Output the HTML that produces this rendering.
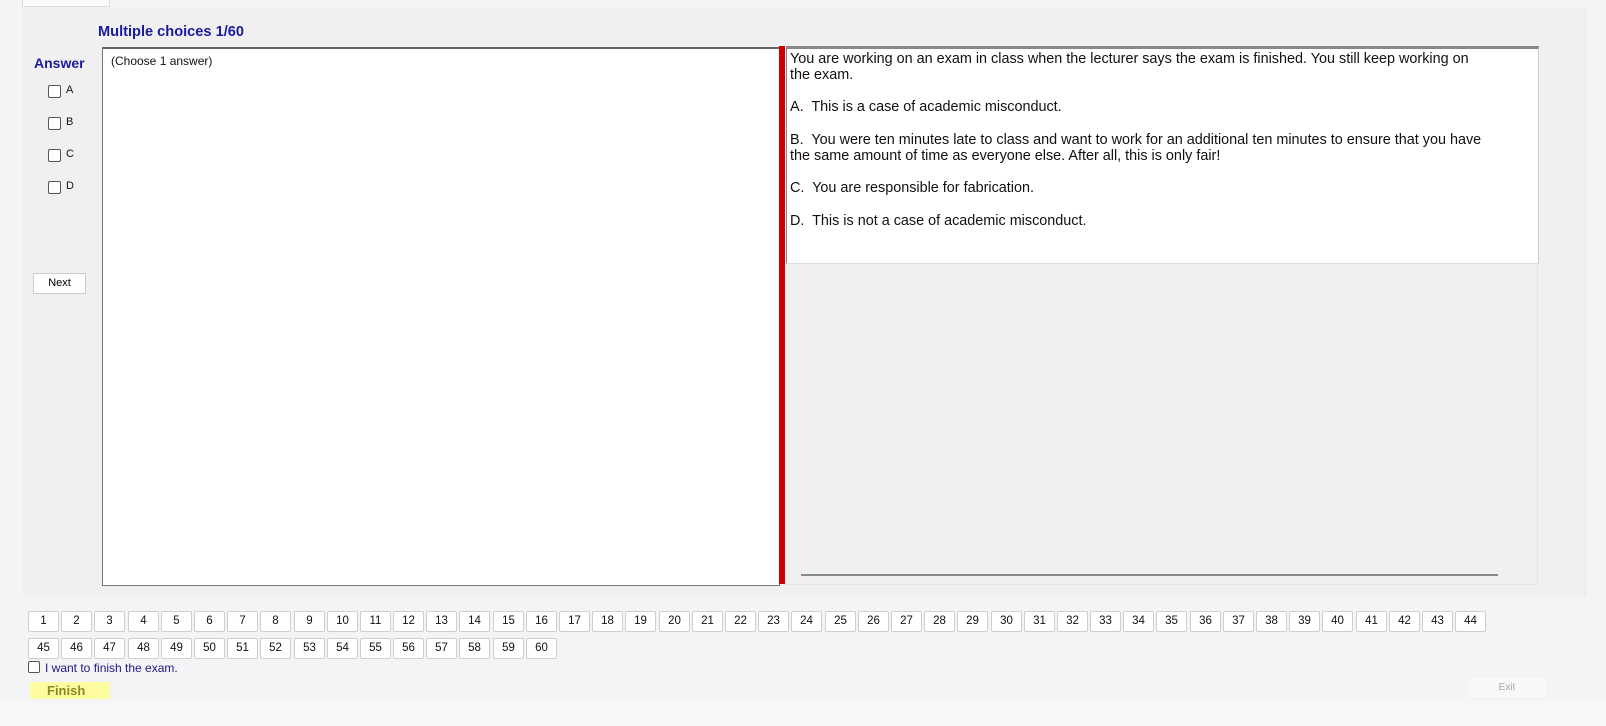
<!DOCTYPE html>
<html><head><style>
body{margin:0;width:1606px;height:726px;background:#f4f4f7;font-family:"Liberation Sans",Arial,sans-serif;position:relative;overflow:hidden}
.a{position:absolute}
.nb{position:absolute;width:29px;height:19px;background:#fff;border:1px solid #cfcfcf;border-radius:2px;font-size:11.5px;text-align:center;line-height:19px;color:#111}
.cb{position:absolute;width:11px;height:11px;border:1px solid #555;border-radius:2px;background:#fff}
.cl{position:absolute;font-size:11px;color:#111}
.q{position:absolute;left:808px;font-size:14.4px;color:#111;line-height:16px}
</style></head><body>
<div class="a" style="left:22px;top:8px;width:1563px;height:588px;background:#f0f0f0;border-right:1px solid #e6e6e6"></div>
<div class="a" style="left:22px;top:0;width:86px;height:6px;background:#fbfbfb;border:1px solid #ddd;border-top:none"></div>
<div class="a" style="left:98px;top:24px;font-size:14.6px;font-weight:bold;color:#1a1aa0">Multiple choices 1/60</div>
<div class="a" style="left:34px;top:55px;font-size:14px;font-weight:bold;color:#1a1aa0">Answer</div>
<div class="cb" style="left:48px;top:85px"></div><div class="cl" style="left:66px;top:84px">A</div>
<div class="cb" style="left:48px;top:117px"></div><div class="cl" style="left:66px;top:116px">B</div>
<div class="cb" style="left:48px;top:149px"></div><div class="cl" style="left:66px;top:148px">C</div>
<div class="cb" style="left:48px;top:181px"></div><div class="cl" style="left:66px;top:180px">D</div>
<div class="a" style="left:33px;top:273px;width:51px;height:19px;background:#fff;border:1px solid #ccc;font-size:11px;text-align:center;line-height:19px">Next</div>
<div class="a" style="left:102px;top:47px;width:676px;height:536px;background:#fff;border:1px solid #777;border-top:2px solid #666"></div>
<div class="a" style="left:111px;top:54px;font-size:12px;color:#111">(Choose 1 answer)</div>
<div class="a" style="left:779px;top:46px;width:6px;height:538px;background:#d00000"></div>
<div class="a" style="left:786px;top:46px;width:751px;height:538px;background:#f0f0f0;border-right:1px solid #e4e4e4;border-bottom:1px solid #e4e4e4"></div>
<div class="a" style="left:786px;top:46px;width:751px;height:214px;background:#fff;border-top:3px solid #888;border-left:1px solid #888;border-right:1px solid #ccc;border-bottom:1px solid #ddd"></div>
<div class="a" style="left:801px;top:574px;width:697px;height:2px;background:#888"></div>
<div class="q" style="left:790px;top:51px">You are working on an exam in class when the lecturer says the exam is finished. You still keep working on<br>the exam.</div>
<div class="q" style="left:790px;top:99px">A.&nbsp; This is a case of academic misconduct.</div>
<div class="q" style="left:790px;top:132px">B.&nbsp; You were ten minutes late to class and want to work for an additional ten minutes to ensure that you have<br>the same amount of time as everyone else. After all, this is only fair!</div>
<div class="q" style="left:790px;top:180px">C.&nbsp; You are responsible for fabrication.</div>
<div class="q" style="left:790px;top:213px">D.&nbsp; This is not a case of academic misconduct.</div>
<div id="nums"></div>
<div class="cb" style="left:28px;top:661px;width:10px;height:10px"></div>
<div class="a" style="left:45px;top:661px;font-size:12px;color:#1a1a80">I want to finish the exam.</div>
<div class="a" style="left:30px;top:682px;width:80px;height:17px;background:#fdfca0;color:#8a8a20;font-weight:bold;font-size:13px;line-height:17px;padding-left:17px;box-sizing:border-box">Finish</div>
<div class="a" style="left:1468px;top:678px;width:78px;height:20px;background:#f8f8fa;color:#aaa;font-size:10px;text-align:center;line-height:20px">Exit</div>
<div class="a" style="left:0;top:700px;width:1606px;height:26px;background:#f7f7f9"></div>
<script>
var h='';for(var i=1;i<=60;i++){var r=i<=44?0:1,c=r?i-45:i-1;var x=Math.round(28+c*33.19),y=r?638:611;h+='<div class="nb" style="left:'+x+'px;top:'+y+'px">'+i+'</div>';}
document.getElementById('nums').innerHTML=h;
</script>
</body></html>
